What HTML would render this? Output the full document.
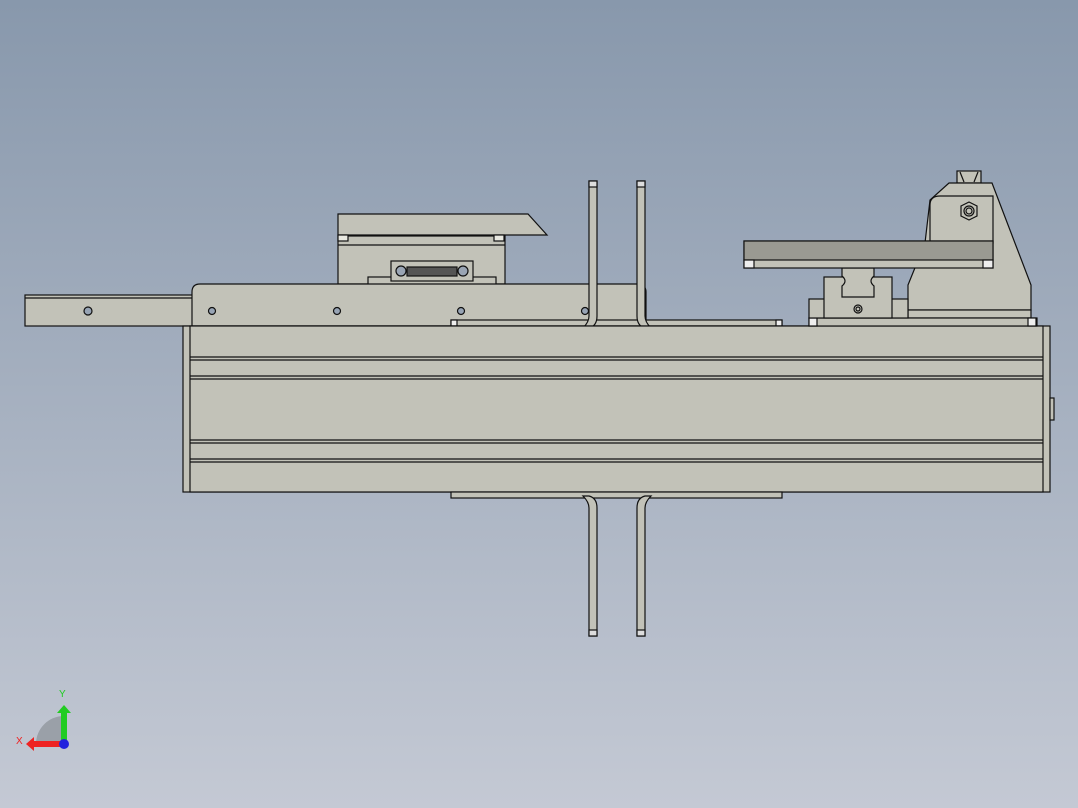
<!DOCTYPE html>
<html><head><meta charset="utf-8"><style>
html,body{margin:0;padding:0;}
body{width:1078px;height:808px;overflow:hidden;background:linear-gradient(#8898ac,#c4c9d4);}
svg{display:block}
</style></head><body>
<svg width="1078" height="808" viewBox="0 0 1078 808" xmlns="http://www.w3.org/2000/svg">
<g stroke="#111" stroke-width="1.2" fill="#c2c2b8">
<rect x="25" y="295" width="168" height="31"/>
<line x1="25" y1="298" x2="193" y2="298"/>
<circle cx="88" cy="311" r="4" fill="#97a4b5"/>
<rect x="338" y="236" width="167" height="48"/>
<line x1="338" y1="245" x2="505" y2="245"/>
<polygon points="338,214 528,214 547,235 338,235"/>
<rect x="338" y="235" width="10" height="6" fill="#e8e8e0"/>
<rect x="494" y="235" width="10" height="6" fill="#e8e8e0"/>
<rect x="368" y="277" width="128" height="8"/>
<rect x="391" y="261" width="82" height="20"/>
<rect x="407" y="267" width="50" height="9" fill="#555"/>
<circle cx="401" cy="271" r="5" fill="#9aa5b4"/>
<circle cx="463" cy="271" r="5" fill="#9aa5b4"/>
<path d="M192,326 L192,292 Q192,284 200,284 L640,284 Q646,286 646,292 L646,326 Z"/>
<circle cx="212" cy="311" r="3.5" fill="#97a4b5"/>
<circle cx="337" cy="311" r="3.5" fill="#97a4b5"/>
<circle cx="461" cy="311" r="3.5" fill="#97a4b5"/>
<circle cx="585" cy="311" r="3.5" fill="#97a4b5"/>
<rect x="451" y="320" width="331" height="6"/>
<rect x="451" y="320" width="6" height="6" fill="#eee"/>
<rect x="776" y="320" width="6" height="6" fill="#eee"/>
<path d="M589,181 L597,181 L597,316 Q597,326 589,328 L583,328 Q589,322 589,316 Z"/>
<path d="M637,181 L645,181 L645,316 Q645,322 651,328 L645,328 Q637,326 637,316 Z"/>
<rect x="589" y="181" width="8" height="6" fill="#ddd"/>
<rect x="637" y="181" width="8" height="6" fill="#ddd"/>
<rect x="183" y="326" width="867" height="166"/>
<rect x="190" y="326" width="853" height="166"/>
<line x1="190" y1="357" x2="1043" y2="357"/><line x1="190" y1="360" x2="1043" y2="360"/>
<line x1="190" y1="376" x2="1043" y2="376"/><line x1="190" y1="379" x2="1043" y2="379"/>
<line x1="190" y1="440" x2="1043" y2="440"/><line x1="190" y1="443" x2="1043" y2="443"/>
<line x1="190" y1="459" x2="1043" y2="459"/><line x1="190" y1="462" x2="1043" y2="462"/>
<rect x="1050" y="398" width="4" height="22"/>
<rect x="451" y="492" width="331" height="6"/>
<path d="M589,636 L597,636 L597,508 Q597,498 589,496 L583,496 Q589,502 589,508 Z"/>
<path d="M637,636 L645,636 L645,508 Q645,502 651,496 L645,496 Q637,498 637,508 Z"/>
<rect x="589" y="630" width="8" height="6" fill="#ddd"/>
<rect x="637" y="630" width="8" height="6" fill="#ddd"/>
<rect x="957" y="171" width="24" height="12"/>
<line x1="960" y1="172" x2="964" y2="182"/><line x1="978" y1="172" x2="974" y2="182"/>
<polygon points="949,183 992,183 1031,285 1031,310 908,310 908,285 925,243 930,200"/>
<path d="M930,243 L930,205 Q930,196 940,196 L993,196 L993,243 Z"/>
<polygon points="969,202 977,206 977,216 969,220 961,216 961,206"/>
<circle cx="969" cy="211" r="5"/>
<circle cx="969" cy="211" r="3"/>
<rect x="908" y="310" width="123" height="8"/>
<rect x="809" y="318" width="228" height="8"/>
<rect x="809" y="318" width="8" height="8" fill="#eee"/>
<rect x="1028" y="318" width="8" height="8" fill="#eee"/>
<rect x="809" y="299" width="99" height="19"/>
<rect x="824" y="277" width="68" height="41"/>
<path d="M842,268 L874,268 L874,276 Q868,281 874,286 L874,297 L842,297 L842,286 Q848,281 842,276 Z"/>
<circle cx="858" cy="309" r="4"/>
<circle cx="858" cy="309" r="2"/>
<rect x="744" y="241" width="249" height="27" fill="#c2c2b8"/>
<rect x="744" y="241" width="249" height="19" fill="#9a9a92"/>
<rect x="744" y="260" width="10" height="8" fill="#eee"/>
<rect x="983" y="260" width="10" height="8" fill="#eee"/>
</g>
<path d="M36,744 A28,28 0 0 1 64,716 L64,744 Z" fill="#9aa0a8"/>
<rect x="61" y="712" width="6" height="32" fill="#2c2"/>
<polygon points="57,713 64,705 71,713" fill="#2c2"/>
<rect x="33" y="741" width="30" height="6" fill="#e22"/>
<polygon points="34,737 26,744 34,751" fill="#e22"/>
<circle cx="64" cy="744" r="5" fill="#22d"/>
<text x="59" y="697" font-family="Liberation Sans, sans-serif" font-size="10" fill="#2c2">Y</text>
<text x="16" y="744" font-family="Liberation Sans, sans-serif" font-size="10" fill="#e22">X</text>
</svg>
</body></html>
